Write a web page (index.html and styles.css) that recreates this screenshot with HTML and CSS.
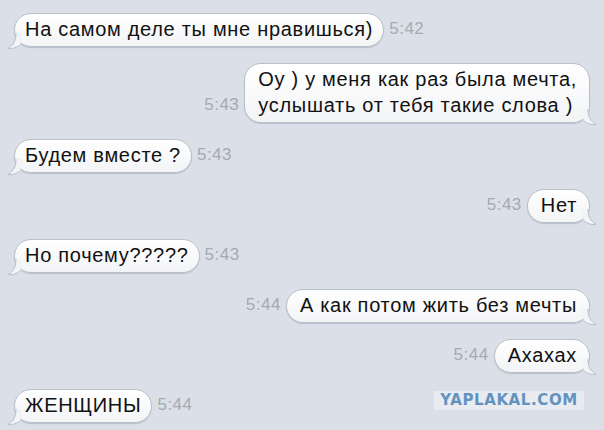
FILE: index.html
```html
<!DOCTYPE html>
<html lang="ru">
<head>
<meta charset="utf-8">
<link rel="stylesheet" href="styles.css">
</head>
<body>
<div class="chat">
  <div class="row in">
    <div class="bubble">На самом деле ты мне нравишься)<svg class="tail" viewBox="0 0 16 16"><path class="tf" d="M9 0 C9 7 7 12 1 15.5 C6 16 10 14.5 13 12 L16 0 Z"/><path class="ts" d="M9 0 C9 7 7 12 1 15.5 C6 16 10 14.5 13 12"/></svg></div>
    <span class="time">5:42</span>
  </div>
  <div class="row out">
    <span class="time">5:43</span>
    <div class="bubble">Оу ) у меня как раз была мечта,<br>услышать от тебя такие слова )<svg class="tail" viewBox="0 0 16 16"><path class="tf" d="M7 0 C7 7 9 12 15 15.5 C10 16 6 14.5 3 12 L0 0 Z"/><path class="ts" d="M7 0 C7 7 9 12 15 15.5 C10 16 6 14.5 3 12"/></svg></div>
  </div>
  <div class="row in">
    <div class="bubble">Будем вместе ?<svg class="tail" viewBox="0 0 16 16"><path class="tf" d="M9 0 C9 7 7 12 1 15.5 C6 16 10 14.5 13 12 L16 0 Z"/><path class="ts" d="M9 0 C9 7 7 12 1 15.5 C6 16 10 14.5 13 12"/></svg></div>
    <span class="time">5:43</span>
  </div>
  <div class="row out">
    <span class="time">5:43</span>
    <div class="bubble">Нет<svg class="tail" viewBox="0 0 16 16"><path class="tf" d="M7 0 C7 7 9 12 15 15.5 C10 16 6 14.5 3 12 L0 0 Z"/><path class="ts" d="M7 0 C7 7 9 12 15 15.5 C10 16 6 14.5 3 12"/></svg></div>
  </div>
  <div class="row in">
    <div class="bubble">Но почему?????<svg class="tail" viewBox="0 0 16 16"><path class="tf" d="M9 0 C9 7 7 12 1 15.5 C6 16 10 14.5 13 12 L16 0 Z"/><path class="ts" d="M9 0 C9 7 7 12 1 15.5 C6 16 10 14.5 13 12"/></svg></div>
    <span class="time">5:43</span>
  </div>
  <div class="row out">
    <span class="time">5:44</span>
    <div class="bubble">А как потом жить без мечты<svg class="tail" viewBox="0 0 16 16"><path class="tf" d="M7 0 C7 7 9 12 15 15.5 C10 16 6 14.5 3 12 L0 0 Z"/><path class="ts" d="M7 0 C7 7 9 12 15 15.5 C10 16 6 14.5 3 12"/></svg></div>
  </div>
  <div class="row out">
    <span class="time">5:44</span>
    <div class="bubble">Ахахах<svg class="tail" viewBox="0 0 16 16"><path class="tf" d="M7 0 C7 7 9 12 15 15.5 C10 16 6 14.5 3 12 L0 0 Z"/><path class="ts" d="M7 0 C7 7 9 12 15 15.5 C10 16 6 14.5 3 12"/></svg></div>
  </div>
  <div class="row in">
    <div class="bubble">ЖЕНЩИНЫ<svg class="tail" viewBox="0 0 16 16"><path class="tf" d="M9 0 C9 7 7 12 1 15.5 C6 16 10 14.5 13 12 L16 0 Z"/><path class="ts" d="M9 0 C9 7 7 12 1 15.5 C6 16 10 14.5 13 12"/></svg></div>
    <span class="time">5:44</span>
  </div>
</div>
<div class="watermark">YAPLAKAL.COM</div>
</body>
</html>
```

FILE: styles.css
```css
html, body {
  margin: 0;
  padding: 0;
}
body {
  width: 604px;
  height: 430px;
  overflow: hidden;
  background: #dbe0e8;
  font-family: "Liberation Sans", Arial, sans-serif;
  position: relative;
}
.chat {
  display: flex;
  flex-direction: column;
  gap: 16px;
  padding: 13px 14px 0 14px;
}
.row {
  display: flex;
  align-items: flex-end;
  gap: 5px;
}
.row.out {
  justify-content: flex-end;
}
.bubble {
  position: relative;
  background: linear-gradient(#ffffff, #f3f4f6);
  border: 1px solid #b9c0ca;
  border-radius: 17px;
  padding: 2px 10px 4px 10px;
  font-size: 20px;
  letter-spacing: 0.7px;
  line-height: 26px;
  color: #111;
  box-shadow: 0 1px 1px rgba(80, 90, 110, 0.25);
  white-space: nowrap;
}
.out .bubble {
  padding-left: 13px;
  padding-right: 12px;
}
.tail {
  position: absolute;
  width: 16px;
  height: 16px;
  bottom: -3px;
  overflow: visible;
}
.in .tail {
  left: -8px;
}
.out .tail {
  right: -8px;
}
.tf {
  fill: #f3f4f6;
}
.ts {
  fill: none;
  stroke: #b9c0ca;
  stroke-width: 1;
}
.time {
  font-size: 17px;
  letter-spacing: 0.5px;
  color: #a4aab4;
  line-height: 26px;
  padding-bottom: 5px;
}
.watermark {
  position: absolute;
  left: 434px;
  top: 391px;
  width: 150px;
  height: 19px;
  background: #e8ecf1;
  color: #6293be;
  font-family: "DejaVu Sans", sans-serif;
  font-weight: bold;
  font-size: 15px;
  line-height: 19px;
  text-align: center;
  letter-spacing: 0.6px;
}
```
